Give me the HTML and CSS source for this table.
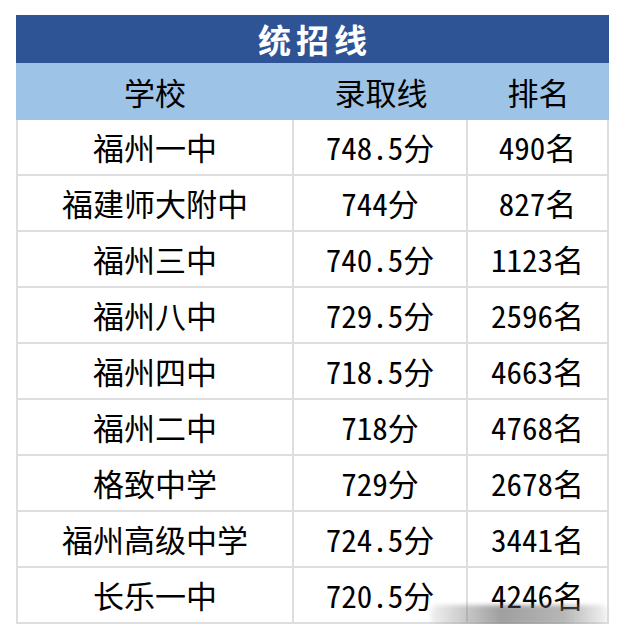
FILE: index.html
```html
<!DOCTYPE html>
<html lang="zh-CN">
<head>
<meta charset="utf-8">
<link rel="stylesheet" href="styles.css">
</head>
<body>
<div class="sheet">
  <div class="title">统招线</div>
  <div class="row head">
    <div class="cell">学校</div>
    <div class="cell">录取线</div>
    <div class="cell">排名</div>
  </div>
  <div class="row data"><div class="cell">福州一中</div><div class="cell">748.5分</div><div class="cell">490名</div></div>
  <div class="row data"><div class="cell">福建师大附中</div><div class="cell">744分</div><div class="cell">827名</div></div>
  <div class="row data"><div class="cell">福州三中</div><div class="cell">740.5分</div><div class="cell">1123名</div></div>
  <div class="row data"><div class="cell">福州八中</div><div class="cell">729.5分</div><div class="cell">2596名</div></div>
  <div class="row data"><div class="cell">福州四中</div><div class="cell">718.5分</div><div class="cell">4663名</div></div>
  <div class="row data"><div class="cell">福州二中</div><div class="cell">718分</div><div class="cell">4768名</div></div>
  <div class="row data"><div class="cell">格致中学</div><div class="cell">729分</div><div class="cell">2678名</div></div>
  <div class="row data"><div class="cell">福州高级中学</div><div class="cell">724.5分</div><div class="cell">3441名</div></div>
  <div class="row data"><div class="cell">长乐一中</div><div class="cell">720.5分</div><div class="cell">4246名</div></div>
  <div class="watermark"></div>
</div>
</body>
</html>
```
FILE: styles.css
```css
* { box-sizing: border-box; }
html, body { margin: 0; padding: 0; background: #ffffff; }
body {
  font-family: "Noto Sans CJK SC", "Noto Sans", sans-serif;
  color: #000000;
}
.sheet {
  position: relative;
  width: 593px;
  margin: 15px 0 0 16px;
}
.title {
  height: 48px;
  background: #2f5496;
  color: #ffffff;
  font-weight: 700;
  font-size: 33px;
  letter-spacing: 5px;
  padding-left: 5px;
  line-height: 48px;
  text-align: center;
}
.row {
  display: grid;
  grid-template-columns: 278px 174px 141px;
}
.head {
  height: 57px;
  background: #9dc3e6;
}
.head .cell {
  font-size: 31px;
  line-height: 57px;
  text-align: center;
}
.data {
  height: 56px;
  border-bottom: 2px solid #dedede;
}
.data .cell {
  font-size: 31px;
  line-height: 54px;
  text-align: center;
  border-right: 2px solid #dedede;
  font-feature-settings: "hwid";
}
.data .cell:first-child {
  border-left: 2px solid #dedede;
}
.watermark {
  position: absolute;
  left: 414px;
  top: 590px;
  width: 178px;
  height: 20px;
  border-radius: 8px;
  background: linear-gradient(90deg, rgba(210,210,210,0.3), rgba(80,80,80,0.55) 40%, rgba(110,110,110,0.5) 75%, rgba(215,215,215,0.3));
  filter: blur(2px);
}
```
